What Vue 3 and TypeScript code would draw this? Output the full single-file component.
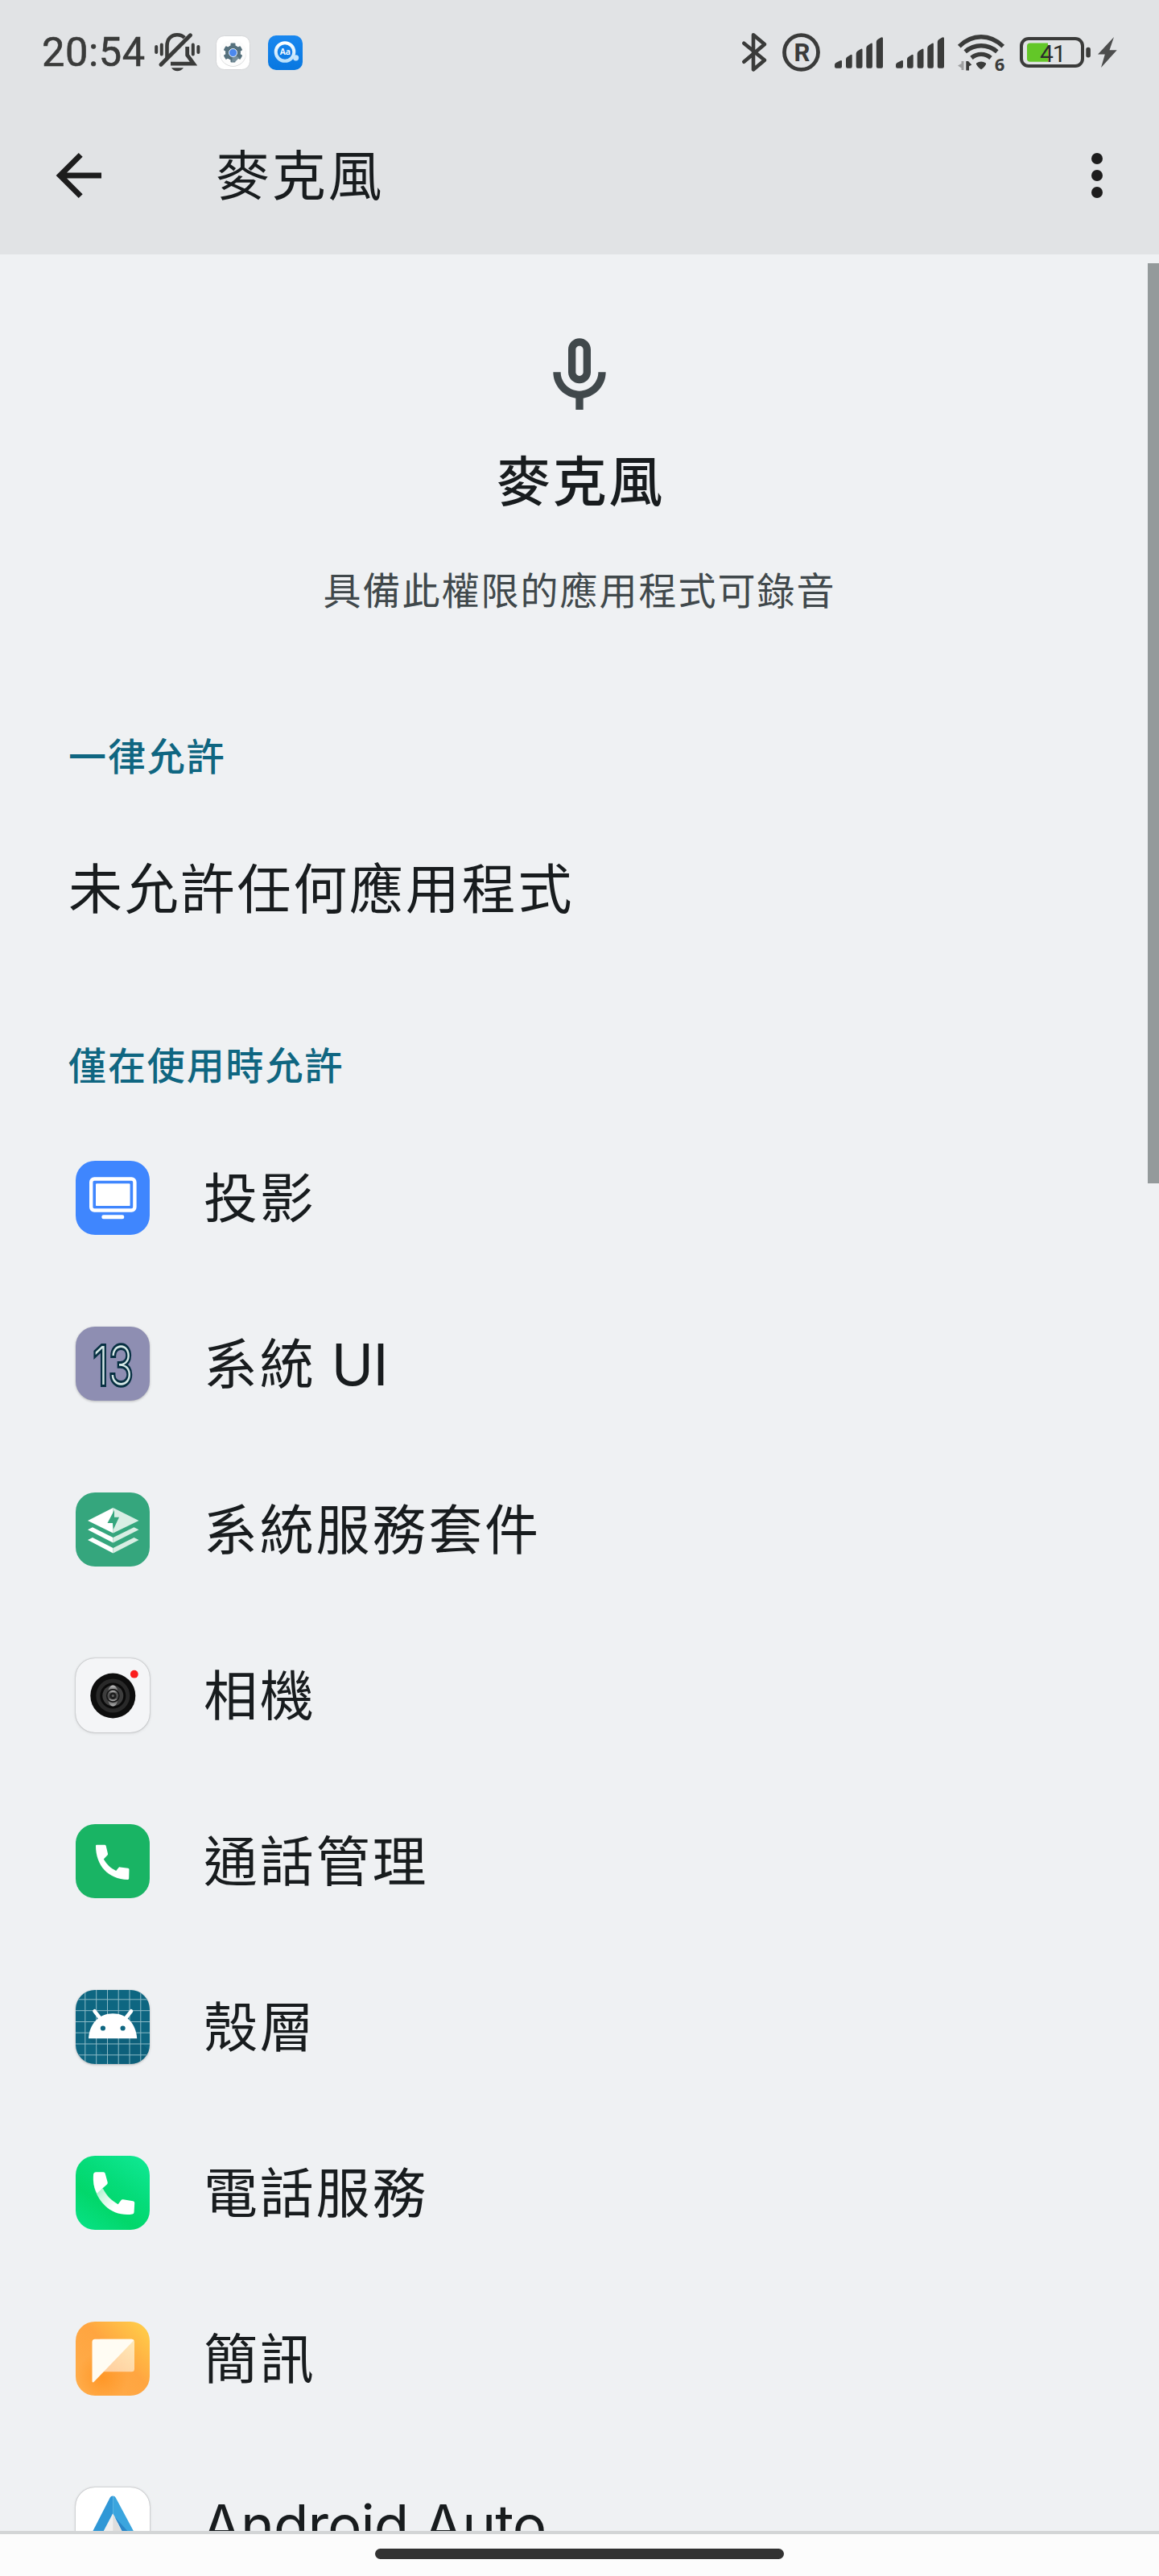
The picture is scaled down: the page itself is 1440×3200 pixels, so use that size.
<script setup lang="ts">
interface AppEntry {
  id: string
  name: string
  latin?: string
}

const apps: AppEntry[] = [
  { id: 'cast', name: '投影' },
  { id: 'systemui', name: '系統', latin: 'UI' },
  { id: 'services', name: '系統服務套件' },
  { id: 'camera', name: '相機' },
  { id: 'calls', name: '通話管理' },
  { id: 'shell', name: '殼層' },
  { id: 'phone', name: '電話服務' },
  { id: 'messages', name: '簡訊' },
  { id: 'auto', name: '', latin: 'Android Auto' },
]

const signalBars: string[] = [
  'M0 34.5Q0 33 1.5 32L7 29.2Q9 28.4 9 30V36.5Q9 38.7 7 38.7H2Q0 38.7 0 36.5Z',
  'M14 27.5Q14 25.5 16 24.5L19.5 22.3Q21.7 21 21.7 23V36.5Q21.7 38.7 19.7 38.7H16Q14 38.7 14 36.5Z',
  'M26.7 20.5Q26.7 18.5 28.7 17.3L32.3 15Q34.5 13.7 34.5 16V36.5Q34.5 38.7 32.5 38.7H28.7Q26.7 38.7 26.7 36.5Z',
  'M39.3 13.5Q39.3 11.5 41.3 10.3L44.8 8Q46.9 6.7 46.9 9V36.5Q46.9 38.7 45 38.7H41.3Q39.3 38.7 39.3 36.5Z',
  'M51.8 6Q51.8 4 53.8 2.8L57.7.6Q60 -.6 60 1.8V36.5Q60 38.7 58 38.7H53.8Q51.8 38.7 51.8 36.5Z',
]

const gridLines: number[] = [11.8, 25.7, 39.5, 53.2, 67, 80.8]
</script>

<template>
  <div class="screen">
    <div class="status">
      <span class="clock">20:54</span>
      <svg class="bell" width="57" height="48" viewBox="0 0 57 48" fill="none" stroke="#3a3b3a">
        <path d="M15.5 31V16C15.5 7 21 2.2 28 2.2C32 2.2 35 3.5 37.2 5.8" stroke-width="4.6" />
        <path d="M8 39.2L44.5 2.8" stroke-width="5" stroke-linecap="round" />
        <path d="M20 38.2H48.5L40.7 27.5V17" stroke-width="4.8" />
        <path d="M21 43.2H36C34 46 31.5 47.3 28.3 47.3C25 47.3 23 46 21 43.2Z" fill="#3a3b3a" stroke="none" />
        <g stroke-width="4" stroke-linecap="round">
          <path d="M2.2 17V24M8.8 14.5V26.5M47.8 14.5V26.5M54.4 17V24" />
        </g>
      </svg>
      <svg class="note-gear" width="43" height="43" viewBox="0 0 43 43">
        <rect x=".5" y=".5" width="42" height="42" rx="10" fill="#fff" stroke="#d5d6d8" />
        <circle cx="21.5" cy="22.5" r="16.3" fill="#d0d2d3" />
        <circle cx="21.5" cy="21.6" r="16.3" fill="#fcfcfc" />
        <g fill="#55707c">
          <circle cx="21.5" cy="21.5" r="9.5" />
          <rect v-for="a in [0, 60, 120]" :key="a" x="18.5" y="9.6" width="6" height="23.8" rx="1" :transform="`rotate(${a} 21.5 21.5)`" />
        </g>
        <path d="M21.5 21.5L29 28L25 32L20 33Z" fill="#78909c" />
        <circle cx="21.5" cy="21.5" r="5" fill="#4b88ee" stroke="#eef4fb" stroke-width="1" />
      </svg>
      <svg class="note-lens" width="43" height="43" viewBox="0 0 43 43">
        <defs>
          <linearGradient id="lensBg" x1="0" y1="0" x2="0" y2="1">
            <stop offset="0" stop-color="#1987ef" /><stop offset="1" stop-color="#0877e0" />
          </linearGradient>
          <linearGradient id="lensRing" x1="0" y1="0" x2="0" y2="1">
            <stop offset="0" stop-color="#fff" /><stop offset="1" stop-color="#b9e0fb" />
          </linearGradient>
        </defs>
        <rect width="43" height="43" rx="10" fill="url(#lensBg)" />
        <circle cx="21" cy="20.5" r="11.3" fill="none" stroke="url(#lensRing)" stroke-width="4" />
        <circle cx="34.6" cy="27.8" r="3.6" fill="#c4e4fc" />
        <text x="21.3" y="24" text-anchor="middle" class="lens-text">Aa</text>
      </svg>
      <div class="status-right">
        <svg width="31" height="48" viewBox="0 0 31 48" fill="none" stroke="#3a3b3a" stroke-width="4.6" stroke-linejoin="round" stroke-linecap="round">
          <path d="M2.3 12.8L28 33.8L14 45.4V2.3L28 14L2.3 35.8" />
        </svg>
        <svg class="reg" width="48" height="48" viewBox="0 0 48 48">
          <ellipse cx="23.5" cy="24" rx="21" ry="21.4" fill="none" stroke="#3a3b3a" stroke-width="4.8" />
          <text x="24.4" y="34.9" text-anchor="middle" class="reg-text">R</text>
        </svg>
        <svg class="signal" width="60" height="39" viewBox="0 0 60 39" fill="#3a3b3a">
          <path v-for="d in signalBars" :key="d" :d="d" />
        </svg>
        <svg class="signal second" width="60" height="39" viewBox="0 0 60 39" fill="#3a3b3a">
          <path v-for="d in signalBars" :key="d" :d="d" />
        </svg>
        <svg class="wifi" width="59" height="48" viewBox="0 0 59 48">
          <g fill="none" stroke="#3a3b3a" stroke-width="5.4">
            <path d="M1.8 16.6Q14 4.8 29 4.8T56.2 16.6" />
            <path d="M9.2 23.2Q18 15.8 29 15.8T48.8 23.2" />
            <path d="M17 30.8Q22.5 26.4 29 26.4T41 30.8" />
          </g>
          <path d="M23 37.5Q29 33.4 35 37.5V39Q32 44 29 45.2Q26 44 23 39Z" fill="#3a3b3a" />
          <path d="M7.5 35V46H4.5V43.6L0 40.5L4.5 38V35Z" fill="#9fa0a1" />
          <path d="M10.3 46.5V35H13L17.3 39.5L14 41.3V46.5Z" fill="#3a3b3a" />
          <text x="45.8" y="47" class="wifi-text">6</text>
        </svg>
        <svg class="battery" width="89" height="38" viewBox="0 0 89 38">
          <rect x="2" y="2" width="76" height="34" rx="9" fill="none" stroke="#3a3b3a" stroke-width="4" />
          <rect x="82.3" y="12.8" width="5.6" height="12.6" rx="2.6" fill="#3a3b3a" />
          <path d="M13 7.4H35V30.8H13Q9 30.8 9 27V11Q9 7.4 13 7.4Z" fill="#63c728" />
          <text x="25" y="30.5" class="battery-text">41</text>
        </svg>
        <svg class="bolt" width="24" height="38" viewBox="0 0 24 38" fill="#4c4d4d">
          <path d="M20 0L0 21.5H8.8L4 38L23.7 16.3H14.5Z" />
        </svg>
      </div>
    </div>

    <header class="appbar">
      <svg class="back" width="56" height="56" viewBox="0 0 56 56" fill="none" stroke="#1d1d1d" stroke-width="7">
        <path d="M56 28H6M30.2 2.4L4.6 28L30.2 53.6" />
      </svg>
      <h1 class="bar-title">麥克風</h1>
      <div class="menu"><i></i><i></i><i></i></div>
    </header>

    <main class="content">
      <section class="hero">
        <svg width="112" height="112" viewBox="0 0 24 24" fill="#40484b">
          <path fill-rule="evenodd" d="M12 14c1.66 0 3-1.34 3-3V5c0-1.66-1.34-3-3-3S9 3.34 9 5v6c0 1.66 1.34 3 3 3zm-1-9c0-.55.45-1 1-1s1 .45 1 1v6c0 .55-.45 1-1 1s-1-.45-1-1V5z" />
          <path d="M17 11c0 2.76-2.24 5-5 5s-5-2.24-5-5H5c0 3.53 2.61 6.43 6 6.92V21h2v-3.08c3.39-.49 6-3.39 6-6.92h-2z" />
        </svg>
        <h2 class="hero-title">麥克風</h2>
        <p class="hero-desc">具備此權限的應用程式可錄音</p>
      </section>

      <h3 class="group">一律允許</h3>
      <div class="row empty"><span class="label">未允許任何應用程式</span></div>

      <h3 class="group">僅在使用時允許</h3>
      <div v-for="app in apps" :key="app.id" class="row">
        <div class="icon" :class="app.id">
          <svg width="92" height="92" viewBox="0 0 92 92">
            <template v-if="app.id === 'cast'">
              <rect x="19.2" y="22.5" width="54.2" height="39" rx="4" fill="none" stroke="#fff" stroke-width="4.4" />
              <rect x="25" y="28.3" width="42.6" height="27.8" rx="1.2" fill="#fff" />
              <rect x="32.3" y="67.3" width="28" height="5" rx="2.4" fill="#fff" />
            </template>
            <template v-else-if="app.id === 'systemui'">
              <text x="46.5" y="71.5" text-anchor="middle" class="thirteen" textLength="50" lengthAdjust="spacingAndGlyphs">13</text>
            </template>
            <template v-else-if="app.id === 'services'">
              <path d="M46.5 19L15 35L46.5 50.5Z" fill="#fff" />
              <path d="M46.5 19L78.5 35L46.5 50.5Z" fill="#d8eee4" />
              <path d="M48 22L39.5 38H46L46.8 46L54 30.8H48Z" fill="#35a67d" />
              <path d="M15 46.3L21 43.3L46.5 56V62.5ZM15 59L21 56L46.5 69V75.6Z" fill="#fff" />
              <path d="M78.5 46.3L72.5 43.3L46.5 56V62.5ZM78.5 59L72.5 56L46.5 69V75.6Z" fill="#d8eee4" />
            </template>
            <template v-else-if="app.id === 'camera'">
              <defs>
                <linearGradient id="lens" x1="0" y1="0" x2="0" y2="1">
                  <stop offset="0" stop-color="#c8c8c8" /><stop offset=".28" stop-color="#555" />
                  <stop offset=".7" stop-color="#4a4a4a" /><stop offset="1" stop-color="#b5b5b5" />
                </linearGradient>
              </defs>
              <circle cx="46.3" cy="46.5" r="28" fill="#0d0d0d" />
              <circle cx="46.3" cy="46.5" r="21" fill="#292929" />
              <circle cx="46.3" cy="46.5" r="16" fill="#0a0a0a" />
              <circle cx="46.3" cy="46.5" r="13" fill="#3d3d3d" />
              <ellipse cx="46.3" cy="46.5" rx="7" ry="13" fill="url(#lens)" />
              <circle cx="46.3" cy="46.5" r="8.4" fill="#151515" />
              <circle cx="46.3" cy="46.5" r="6.8" fill="url(#lens)" />
              <circle cx="46.3" cy="46.8" r="4.2" fill="#1d1d1d" />
              <circle cx="46.3" cy="46.5" r="1.6" fill="#606060" />
              <circle cx="72.8" cy="19.7" r="4.9" fill="#fb1d1d" />
            </template>
            <template v-else-if="app.id === 'calls'">
              <path d="M26 25.7H36Q37.3 25.7 37.7 27L40 36.8Q40.2 37.8 39.5 38.5L34.8 43.6C38.5 50 43.5 55 50.2 57.9L53.2 54.2Q54 53.2 55.2 53.4L65 54.8Q66.5 55 66.5 56.5L66.2 67.5Q66.2 68.8 64.8 68.9C40 68.5 25 51 25 27Q25 25.7 26 25.7Z" fill="#fff" />
            </template>
            <template v-else-if="app.id === 'shell'">
              <path d="M16 60.3H76L92 76V92H46Z" fill="#0b5670" opacity=".35" />
              <g stroke="#8dbbc7" stroke-width="1">
                <line v-for="g in gridLines" :key="'v' + g" :x1="g" :x2="g" y1="0" y2="92" />
                <line v-for="g in gridLines" :key="'h' + g" :y1="g" :y2="g" x1="0" x2="92" />
              </g>
              <path d="M23.5 26.3L31.5 36.5M69 26.3L61 36.5" stroke="#fff" stroke-width="4.6" stroke-linecap="round" />
              <path d="M16 60.3C17 42 29 29.3 46.2 29.3C63.5 29.3 75 42 76.2 60.3Z" fill="#fff" />
              <circle cx="33.9" cy="47.5" r="3.1" fill="#0e6681" />
              <circle cx="58.6" cy="47.5" r="3.1" fill="#0e6681" />
            </template>
            <template v-else-if="app.id === 'phone'">
              <defs>
                <linearGradient id="handset" gradientUnits="userSpaceOnUse" x1="26" y1="44" x2="50" y2="62">
                  <stop offset="0" stop-color="#a8f3cd" /><stop offset=".35" stop-color="#cff8e3" /><stop offset="1" stop-color="#fff" />
                </linearGradient>
              </defs>
              <path d="M22 26C22 32 23 38 26.3 44.5L33.8 40.6C38.5 49.5 44 55.5 52.7 60.3L56.2 55.5Q57.2 54 59 54.3L71.3 56.3Q73.3 56.6 73.2 58.6L72.6 70Q72.5 72 70.5 72.5C58 74.5 45 70.5 36.5 62C26 51.5 21 38 22 26Z" fill="url(#handset)" />
              <path d="M22 24Q22 20.3 25.5 20.3H34.5Q36.3 20.3 36.7 22L39.7 33Q40 34.4 39 35.4L26.5 46.5C22.5 39 21.5 31 22 24Z" fill="#fff" />
            </template>
            <template v-else-if="app.id === 'messages'">
              <defs>
                <linearGradient id="fold" gradientUnits="userSpaceOnUse" x1="73" y1="25" x2="45" y2="62">
                  <stop offset="0" stop-color="#ffe9b8" /><stop offset="1" stop-color="#ffd0a0" />
                </linearGradient>
              </defs>
              <path d="M30 21.7H69.5Q73 21.7 73 25.2V58.8Q73 62.3 69.5 62.3H34Z" fill="url(#fold)" />
              <path d="M20.5 25.2Q20.5 21.7 24 21.7H69.5Q71.5 21.7 72.3 23.2L23 74.6Q20.5 76.8 20.5 73.4Z" fill="#fffcf3" />
            </template>
            <template v-else>
              <path d="M46.2 32.3L18 88H46.2Z" fill="#f0f0f0" />
              <path d="M46.2 32.3L74 88H46.2Z" fill="#dedede" />
              <path d="M46.2 10.5Q43.6 10.5 42.6 12.8L4 88H17L46.2 32.3Z" fill="#2f97d6" />
              <path d="M46.2 10.5Q48.8 10.5 49.8 12.8L90 88H78L46.2 32.3Z" fill="#3ba5de" />
              <path d="M48.5 36.5L65 54.8V64L58 55Z" fill="#2a86c8" />
            </template>
          </svg>
        </div>
        <span class="label">{{ app.name }}<span v-if="app.latin" class="latin" :class="{ wide: !app.name }">{{ app.latin }}</span></span>
      </div>
      <div class="scrollbar"></div>
    </main>

    <footer class="nav"><div class="handle"></div></footer>
  </div>
</template>

<style>
html,
body {
  margin: 0;
}
</style>

<style scoped>
.screen {
  width: 1440px;
  height: 3200px;
  display: flex;
  flex-direction: column;
  background: #eff1f3;
  color: #181c1e;
  font-family: 'Noto Sans CJK TC', 'Noto Sans', sans-serif;
  overflow: hidden;
}
svg {
  display: block;
  flex: none;
  overflow: visible;
}
h1,
h2,
h3,
p {
  margin: 0;
}
.status {
  box-sizing: border-box;
  height: 130px;
  flex: none;
  display: flex;
  align-items: center;
  padding-left: 52px;
  padding-right: 52px;
  background: #e1e3e5;
}
.clock {
  width: 140px;
  font-family: Roboto, sans-serif;
  font-size: 50.5px;
  line-height: 60px;
  letter-spacing: 0.6px;
  color: #3a3b3a;
  -webkit-text-stroke: 0.6px #3a3b3a;
}
.note-gear {
  margin-left: 19px;
}
.note-lens {
  margin-left: 22px;
}
.lens-text {
  font: 600 10.5px 'Noto Sans', sans-serif;
  fill: #fff;
}
.status-right {
  margin-left: auto;
  display: flex;
  align-items: center;
}
.reg {
  margin-left: 19px;
}
.reg-text {
  font: 700 31px Roboto, sans-serif;
  fill: #3a3b3a;
}
.signal {
  margin-left: 17px;
}
.signal.second {
  margin-left: 16px;
}
.wifi {
  margin-left: 17px;
}
.wifi-text {
  font: 700 22px 'Open Sans', sans-serif;
  fill: #3a3b3a;
}
.battery {
  margin-left: 18px;
}
.battery-text {
  font: 400 30px Roboto, sans-serif;
  letter-spacing: -1px;
  fill: #2c2d2c;
}
.bolt {
  margin-left: 8px;
}
.appbar {
  box-sizing: border-box;
  height: 186px;
  flex: none;
  display: flex;
  align-items: center;
  padding: 0 70px 10px;
  background: #e1e3e5;
}
.bar-title {
  margin-left: 142px;
  margin-bottom: 8px;
  font-size: 67px;
  line-height: 100px;
  font-weight: 400;
  letter-spacing: 2.7px;
}
.menu {
  margin-left: auto;
  display: flex;
  flex-direction: column;
  gap: 7px;
}
.menu i {
  width: 14px;
  height: 14px;
  border-radius: 50%;
  background: #1d1d1d;
}
.content {
  position: relative;
  flex: 1;
  min-height: 0;
  overflow: hidden;
}
.hero {
  display: flex;
  flex-direction: column;
  align-items: center;
  padding: 94.7px 0 57.3px;
}
.hero-title {
  margin-top: 21px;
  padding-left: 3px;
  font-size: 67px;
  line-height: 100px;
  font-weight: 500;
  letter-spacing: 2.7px;
}
.hero-desc {
  margin-top: 52px;
  font-size: 47px;
  line-height: 70px;
  letter-spacing: 2px;
  color: #40484b;
}
.group {
  padding: 79px 85px 29px;
  font-size: 47px;
  line-height: 70px;
  font-weight: 500;
  letter-spacing: 1.9px;
  color: #0f6681;
}
.row {
  height: 206px;
  display: flex;
  align-items: center;
  padding-left: 94px;
}
.row.empty {
  padding-left: 85px;
}
.icon {
  width: 92px;
  height: 92px;
  flex: none;
  margin-right: 67px;
  border-radius: 24px;
}
.label {
  margin-bottom: 8px;
  font-size: 67px;
  line-height: 100px;
  letter-spacing: 2.8px;
  white-space: nowrap;
}
.latin {
  display: inline-block;
  margin-left: 19px;
  font-family: Inter, sans-serif;
  font-size: 71px;
  line-height: 1;
  letter-spacing: -1px;
  transform: translateY(1.5px);
}
.latin.wide {
  margin-left: -2px;
}
.cast {
  background: #3f86fe;
}
.systemui {
  background: #8e8eb2;
  box-shadow: 0 1px 3px rgba(0, 0, 0, 0.25);
}
.thirteen {
  font: 200 66px Inter, sans-serif;
  fill: #d5e8e6;
  stroke: #073042;
  stroke-width: 6px;
  paint-order: stroke;
}
.services {
  background: #35a67d;
}
.camera {
  background: #f4f5f7;
  box-shadow: 0 0 2px rgba(0, 0, 0, 0.35), 0 1px 4px rgba(0, 0, 0, 0.1);
}
.calls {
  background: #19b464;
}
.shell {
  background: #0e6681;
  overflow: hidden;
  box-shadow: 0 1px 3px rgba(0, 0, 0, 0.25);
}
.phone {
  background: linear-gradient(35deg, #08e388 0%, #02d76b 35%, #05dc7a 60%, #10ea96 100%);
}
.messages {
  background: radial-gradient(circle at 36% 75%, #ff9727 0%, rgba(255, 151, 39, 0) 35%),
    linear-gradient(45deg, #ffae4c 0%, #ffa540 55%, #ffd24b 100%);
}
.auto {
  background: #fff;
  overflow: hidden;
  box-shadow: 0 0 2px rgba(0, 0, 0, 0.35), 0 1px 4px rgba(0, 0, 0, 0.1);
}
.scrollbar {
  position: absolute;
  top: 11px;
  right: 0;
  width: 14px;
  height: 1143px;
  background: #949a9b;
}
.nav {
  box-sizing: border-box;
  height: 56px;
  flex: none;
  display: flex;
  justify-content: center;
  padding-top: 18px;
  border-top: 4px solid #d3d5d6;
  background: #fcfcfc;
}
.handle {
  width: 508px;
  height: 13px;
  border-radius: 7px;
  background: #323232;
}
</style>
